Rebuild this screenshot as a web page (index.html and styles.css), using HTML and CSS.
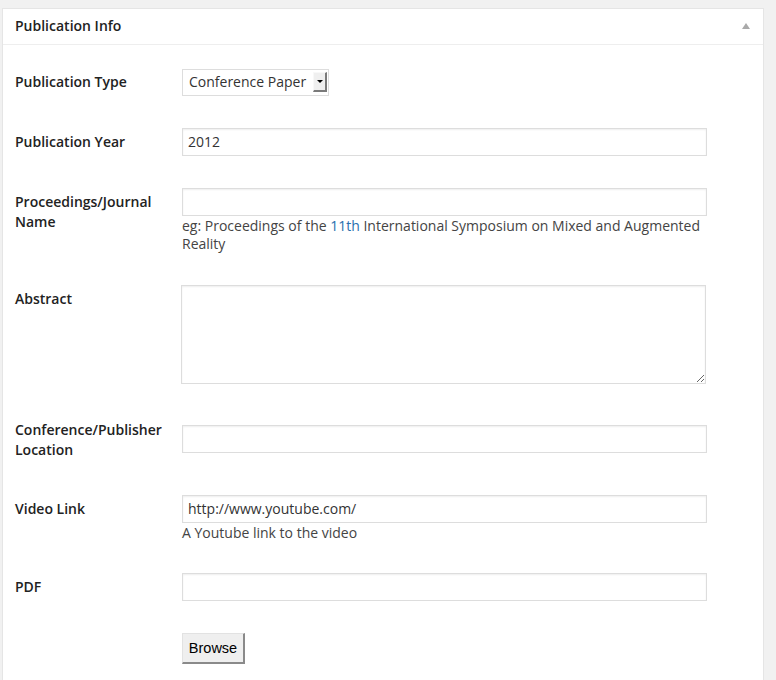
FILE: index.html
```html
<!DOCTYPE html>
<html lang="en">
<head>
<meta charset="utf-8">
<title>Publication Info</title>
<link rel="stylesheet" href="styles.css">
</head>
<body>
<div class="wrap">
  <div class="panel">
    <div class="panel-head">
      <h3 class="panel-title">Publication Info</h3>
      <span class="toggle" aria-hidden="true"></span>
    </div>
    <div class="form">
      <div class="row">
        <label class="lbl lbl-first">Publication Type</label>
        <div class="field">
          <span class="select-wrap">
            <select class="select"><option>Conference Paper</option></select>
            <span class="select-arrow"><span class="tri"></span></span>
          </span>
        </div>
      </div>
      <div class="row">
        <label class="lbl">Publication Year</label>
        <div class="field"><input class="text" type="text" value="2012"></div>
      </div>
      <div class="row">
        <label class="lbl">Proceedings/Journal Name</label>
        <div class="field">
          <input class="text" type="text" value="">
          <p class="desc">eg: Proceedings of the <span class="num">11th</span> International Symposium on Mixed and Augmented Reality</p>
        </div>
      </div>
      <div class="row">
        <label class="lbl">Abstract</label>
        <div class="field"><textarea class="area"></textarea></div>
      </div>
      <div class="row">
        <label class="lbl lbl-high">Conference/Publisher Location</label>
        <div class="field"><input class="text" type="text" value=""></div>
      </div>
      <div class="row">
        <label class="lbl">Video Link</label>
        <div class="field field-tight">
          <input class="text" type="text" value="http://www.youtube.com/">
          <p class="desc">A Youtube link to the video</p>
        </div>
      </div>
      <div class="row">
        <label class="lbl lbl-low">PDF</label>
        <div class="field"><input class="text" type="text" value=""></div>
      </div>
      <div class="row">
        <span class="lbl"></span>
        <div class="field"><button class="browse" type="button">Browse</button></div>
      </div>
    </div>
  </div>
</div>
</body>
</html>
```
FILE: styles.css
```css
html, body {
  margin: 0;
  padding: 0;
}

body {
  background: #f1f1f1;
  font-family: "Open Sans", "DejaVu Sans", sans-serif;
  font-size: 14px;
  color: #444;
}

.wrap {
  padding: 8px 12px 0 2px;
}

.panel {
  background: #fff;
  border: 1px solid #e5e5e5;
  border-bottom: 0;
  min-height: 690px;
}

.panel-head {
  display: flex;
  align-items: center;
  justify-content: space-between;
  box-sizing: border-box;
  height: 36px;
  padding: 0 13px 2px 12px;
  border-bottom: 1px solid #eee;
}

.panel-title {
  margin: 0;
  font-size: 14px;
  font-weight: 600;
  color: #222;
  line-height: 20px;
}

.toggle {
  width: 0;
  height: 0;
  border-left: 4px solid transparent;
  border-right: 4px solid transparent;
  border-bottom: 6px solid #aaa;
}

.form {
  padding: 9px 0 0 12px;
}

.row {
  display: grid;
  grid-template-columns: 155px 525px;
  column-gap: 12px;
  align-items: start;
}

.lbl {
  display: block;
  padding: 19px 0 20px 0;
  font-weight: 600;
  color: #222;
  line-height: 20px;
}

.lbl-first {
  padding-top: 18px;
}

.lbl-high {
  padding-top: 10px;
}

.lbl-low {
  padding-top: 19px;
}

.field {
  padding: 15px 0 17px 0;
}

.field-tight {
  padding-bottom: 16px;
}

.text {
  display: block;
  box-sizing: border-box;
  width: 525px;
  height: 28px;
  margin: 0;
  padding: 0 5px 2px 5px;
  border: 1px solid #ddd;
  border-radius: 0;
  box-shadow: inset 0 1px 2px rgba(0, 0, 0, 0.07);
  background: #fff;
  font-family: "Open Sans", "DejaVu Sans", sans-serif;
  font-size: 14px;
  color: #333;
  outline: none;
}

.area {
  display: block;
  box-sizing: border-box;
  width: 525px;
  height: 99px;
  margin: 0 0 9px -1px;
  padding: 2px 6px;
  border: 1px solid #ddd;
  border-radius: 0;
  box-shadow: inset 0 1px 2px rgba(0, 0, 0, 0.07);
  background: #fff;
  font-family: "Open Sans", "DejaVu Sans", sans-serif;
  font-size: 14px;
  color: #333;
  outline: none;
}

.desc {
  margin: 1px 0 0 0;
  line-height: 18px;
  color: #444;
}

.num {
  color: #2a6fae;
}

.select-wrap {
  position: relative;
  display: inline-block;
  vertical-align: top;
}

.select {
  display: block;
  appearance: none;
  -webkit-appearance: none;
  box-sizing: border-box;
  width: 147px;
  height: 27px;
  margin: 0;
  padding: 0 0 2px 6px;
  border: 1px solid #ddd;
  border-radius: 0;
  background: #fff;
  font-family: "Open Sans", "DejaVu Sans", sans-serif;
  font-size: 14px;
  color: #333;
  outline: none;
}

.select-arrow {
  position: absolute;
  right: 2px;
  top: 3px;
  width: 14px;
  height: 20px;
  box-sizing: border-box;
  background: #efefef;
  border-top: 1px solid #f8f8f8;
  border-left: 1px solid #f8f8f8;
  border-right: 2px solid #7a7a7a;
  border-bottom: 2px solid #7a7a7a;
  display: flex;
  align-items: center;
  justify-content: center;
  pointer-events: none;
}

.tri {
  width: 0;
  height: 0;
  border-left: 3px solid transparent;
  border-right: 3px solid transparent;
  border-top: 3px solid #000;
}

.browse {
  box-sizing: border-box;
  width: 63px;
  height: 31px;
  margin: 0;
  padding: 0;
  background: #efefef;
  border-top: 1px solid #e2e2e2;
  border-left: 1px solid #e2e2e2;
  border-right: 2px solid #8a8a8a;
  border-bottom: 2px solid #8a8a8a;
  border-radius: 0;
  font-family: "Liberation Sans", Arial, sans-serif;
  font-size: 14.5px;
  color: #000;
}
```
